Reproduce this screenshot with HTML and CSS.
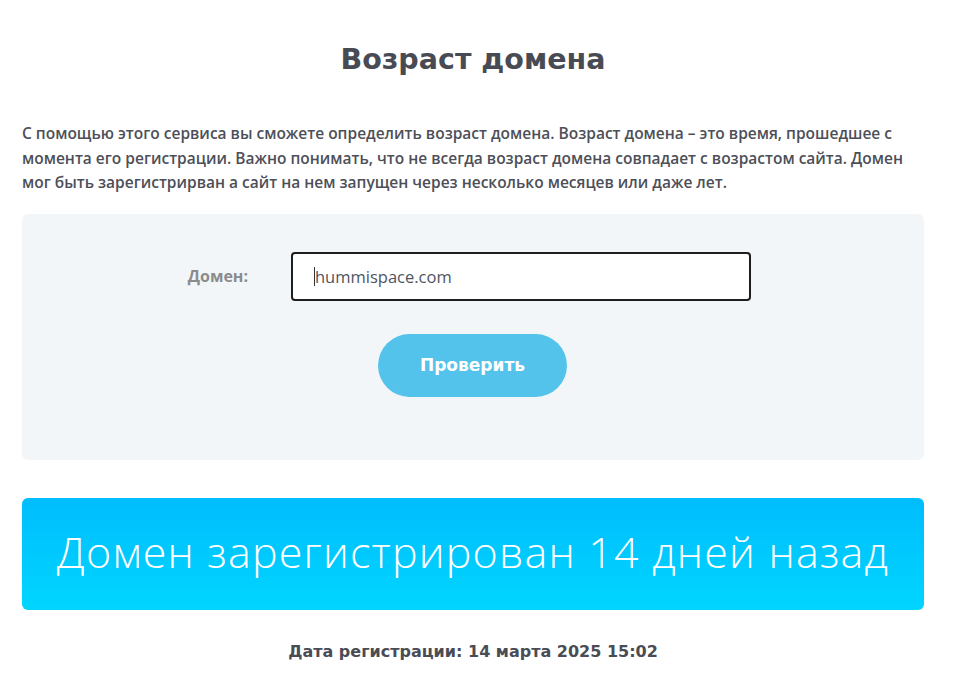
FILE: index.html
```html
<!DOCTYPE html>
<html lang="ru">
<head>
<meta charset="utf-8">
<link rel="stylesheet" href="styles.css">
</head>
<body>
<div class="page">
  <h1 class="title">Возраст домена</h1>
  <p class="intro">С помощью этого сервиса вы сможете определить возраст домена. Возраст домена – это время, прошедшее с момента его регистрации. Важно понимать, что не всегда возраст домена совпадает с возрастом сайта. Домен мог быть зарегистрирван а сайт на нем запущен через несколько месяцев или даже лет.</p>
  <div class="form-box">
    <div class="form-row">
      <label class="label">Домен:</label>
      <div class="input"><span class="caret"></span>hummispace.com</div>
    </div>
    <div class="btn-row">
      <button class="btn">Проверить</button>
    </div>
  </div>
  <div class="result">Домен зарегистрирован 14 дней назад</div>
  <div class="date">Дата регистрации: 14 марта 2025 15:02</div>
</div>
</body>
</html>
```
FILE: styles.css
```css
html, body { margin: 0; padding: 0; background: #fff; }
body { font-family: "Open Sans", "DejaVu Sans", sans-serif; color: #4a4c55; }
.page { padding: 0 50px 0 22px; display: flex; flex-direction: column; }
.title {
  margin: 40px 0 0;
  text-align: center;
  font-family: "DejaVu Sans", sans-serif;
  font-weight: 700;
  font-size: 28.5px;
  line-height: 40px;
  color: #484b53;
}
.intro {
  margin: 41px 0 0;
  font-size: 15.5px;
  line-height: 24.5px;
  font-weight: 600;
  color: #4d4f58;
}
.form-box {
  margin-top: 19px;
  background: #f3f6f8;
  border-radius: 6px;
  height: 246px;
  box-sizing: border-box;
  padding-top: 38px;
}
.form-row { display: flex; align-items: center; }
.label {
  width: 269px;
  text-align: right;
  padding-right: 43px;
  box-sizing: border-box;
  font-weight: 700;
  font-size: 16px;
  color: #8c8c8c;
}
.input {
  width: 460px;
  height: 49px;
  box-sizing: border-box;
  border: 2px solid #1e1e1e;
  border-radius: 4px;
  background: #fff;
  display: flex;
  align-items: center;
  padding-left: 21px;
  font-size: 16.5px;
  color: #4f5560;
}
.caret { display: inline-block; width: 1px; height: 19px; background: #333; }
.btn-row { display: flex; padding-left: 356px; margin-top: 33px; }
.btn {
  width: 189px;
  height: 63px;
  border: none;
  border-radius: 32px;
  background: #54c3ec;
  color: #fff;
  font-family: "DejaVu Sans", sans-serif;
  font-weight: 700;
  font-size: 17px;
}
.result {
  margin-top: 38px;
  height: 112px;
  border-radius: 6px;
  background: linear-gradient(180deg, #00bdfd 0%, #00d5ff 100%);
  color: #fff;
  display: flex;
  align-items: center;
  justify-content: center;
  font-size: 43px;
  letter-spacing: 1.2px;
  font-weight: 300;
  padding-bottom: 4px;
  box-sizing: border-box;
}
.date {
  margin-top: 32px;
  text-align: center;
  font-family: "DejaVu Sans", sans-serif;
  font-weight: 700;
  font-size: 16px;
  color: #4a4c55;
}
```
